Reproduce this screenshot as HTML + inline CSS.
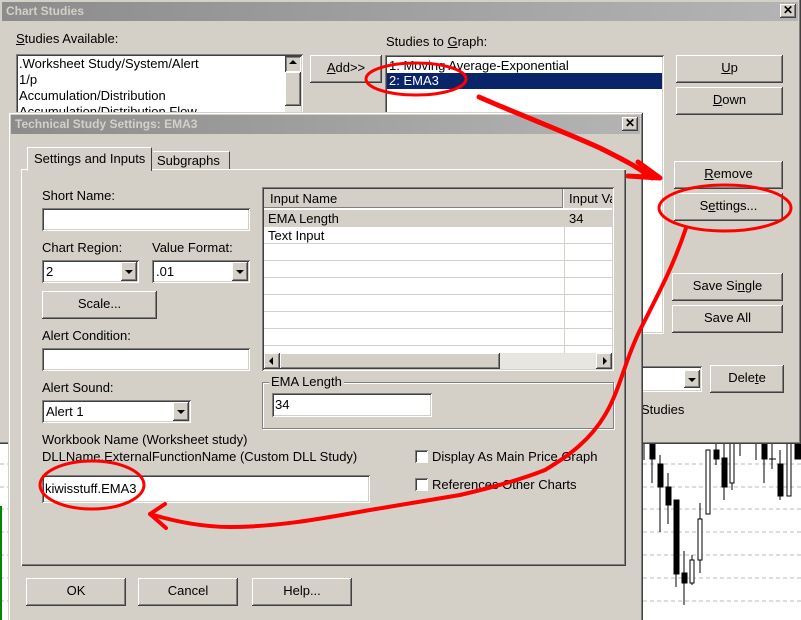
<!DOCTYPE html>
<html><head><meta charset="utf-8"><style>
*{box-sizing:border-box;margin:0;padding:0}
html,body{width:801px;height:620px;overflow:hidden}
body{position:relative;background:#fff;font-family:"Liberation Sans",Tahoma,sans-serif;font-size:13px;color:#000}
.a{position:absolute}
.face{background:#d4d0c8}
.btn{position:absolute;background:#d4d0c8;box-shadow:inset -1px -1px #404040,inset 1px 1px #fff,inset -2px -2px #808080;text-align:center;line-height:26px}
.sunk{position:absolute;background:#fff;box-shadow:inset 1px 1px #808080,inset -1px -1px #fff,inset 2px 2px #404040,inset -2px -2px #d4d0c8}
.title{position:absolute;height:19px;background:linear-gradient(90deg,#8c8c8c,#b4b4b4);color:#d4d0c8;font-weight:bold;font-size:12px;line-height:19px;padding-left:4px}
.xb{position:absolute;width:16px;height:14px;background:#d4d0c8;box-shadow:inset -1px -1px #404040,inset 1px 1px #fff,inset -2px -2px #808080;text-align:center;font-size:12px;line-height:13px;font-weight:bold}
.dd{position:absolute;width:16px;background:#d4d0c8;box-shadow:inset -1px -1px #404040,inset 1px 1px #fff,inset -2px -2px #808080}
.dd:after{content:"";position:absolute;left:4px;top:8px;border-left:4px solid transparent;border-right:4px solid transparent;border-top:4px solid #000}
.t{position:absolute;white-space:nowrap}
.cb{position:absolute;width:13px;height:13px;background:#fff;box-shadow:inset 1px 1px #808080,inset -1px -1px #fff,inset 2px 2px #404040}
</style></head><body>

<svg class="a" style="left:0;top:0" width="801" height="620">
<g stroke="#bbb" stroke-dasharray="4,3">
<line x1="643" y1="464" x2="801" y2="464"/><line x1="643" y1="487" x2="801" y2="487"/><line x1="643" y1="509" x2="801" y2="509"/><line x1="643" y1="532" x2="801" y2="532"/><line x1="643" y1="555" x2="801" y2="555"/><line x1="643" y1="578" x2="801" y2="578"/><line x1="643" y1="601" x2="801" y2="601"/>
<line x1="0" y1="464" x2="8" y2="464"/><line x1="0" y1="487" x2="8" y2="487"/><line x1="0" y1="509" x2="8" y2="509"/><line x1="0" y1="532" x2="8" y2="532"/><line x1="0" y1="555" x2="8" y2="555"/><line x1="0" y1="578" x2="8" y2="578"/><line x1="0" y1="601" x2="8" y2="601"/>
</g>
<line x1="1" y1="506" x2="1" y2="620" stroke="#080" stroke-width="2"/>
<g stroke="#000" fill="#000">
<line x1="644" y1="443" x2="644" y2="460"/>
<line x1="652" y1="443" x2="652" y2="483"/><rect x="650" y="443" width="5" height="16"/>
<line x1="660" y1="455" x2="660" y2="532"/><rect x="658" y="464" width="5" height="23"/>
<line x1="668" y1="473" x2="668" y2="524"/><rect x="666" y="487" width="5" height="18"/>
<line x1="676" y1="500" x2="676" y2="587"/><rect x="674" y="500" width="5" height="74"/>
<line x1="684" y1="551" x2="684" y2="605"/><rect x="682" y="573" width="5" height="10"/>
<line x1="692" y1="555" x2="692" y2="585"/><rect x="690" y="560" width="4" height="23" fill="#fff"/>
<line x1="700" y1="503" x2="700" y2="573"/><rect x="698" y="519" width="4" height="41" fill="#fff"/>
<rect x="706" y="450" width="4" height="64" fill="#fff"/>
<line x1="716" y1="443" x2="716" y2="465"/><rect x="714" y="450" width="5" height="9"/>
<line x1="724" y1="443" x2="724" y2="500"/><rect x="722" y="458" width="5" height="29"/>
<line x1="732" y1="443" x2="732" y2="490"/><rect x="730" y="443" width="4" height="40" fill="#fff"/>
<line x1="740" y1="443" x2="740" y2="456"/>
<line x1="756" y1="443" x2="756" y2="460"/>
<line x1="764" y1="443" x2="764" y2="483"/><rect x="762" y="443" width="5" height="16"/>
<line x1="772" y1="443" x2="772" y2="469"/><line x1="769" y1="459" x2="776" y2="459"/>
<line x1="780" y1="450" x2="780" y2="500"/><rect x="778" y="464" width="5" height="32"/>
<rect x="787" y="443" width="4" height="53" fill="#fff"/>
<rect x="795" y="443" width="6" height="16"/>
</g>
</svg>

<div class="a face" style="left:0;top:0;width:801px;height:444px;box-shadow:inset -1px -1px #404040,inset -2px -2px #808080"></div>
<div class="title" style="left:2px;top:2px;width:796px">Chart Studies</div>
<div class="xb" style="left:780px;top:4px">✕</div>
<div class="t" style="left:16px;top:31px"><u>S</u>tudies Available:</div>
<div class="sunk" style="left:16px;top:54px;width:287px;height:70px"></div>
<div class="t" style="left:19px;top:56px;line-height:16px">.Worksheet Study/System/Alert<br>1/p<br>Accumulation/Distribution<br>Accumulation/Distribution Flow</div>
<div class="a face" style="left:285px;top:56px;width:16px;height:60px;background:#e8e6e0"></div>
<div class="dd" style="left:285px;top:56px;height:16px;transform:rotate(180deg)"></div>
<div class="btn" style="left:285px;top:72px;width:16px;height:34px"></div>
<div class="btn" style="left:310px;top:55px;width:72px;height:28px"><u>A</u>dd&gt;&gt;</div>
<div class="t" style="left:386px;top:34px">Studies to <u>G</u>raph:</div>
<div class="sunk" style="left:385px;top:55px;width:279px;height:279px"></div>
<div class="t" style="left:389px;top:58px">1: Moving Average-Exponential</div>
<div class="a" style="left:387px;top:73px;width:275px;height:16px;background:#0a246a;color:#fff;padding-left:2px;line-height:16px">2: EMA3</div>
<div class="btn" style="left:676px;top:55px;width:107px;height:28px"><u>U</u>p</div>
<div class="btn" style="left:676px;top:87px;width:107px;height:28px"><u>D</u>own</div>
<div class="btn" style="left:674px;top:161px;width:109px;height:28px"><u>R</u>emove</div>
<div class="btn" style="left:674px;top:193px;width:109px;height:28px">S<u>e</u>ttings...</div>
<div class="btn" style="left:672px;top:273px;width:111px;height:28px">Save Si<u>n</u>gle</div>
<div class="btn" style="left:672px;top:305px;width:111px;height:28px">Save All</div>
<div class="sunk" style="left:630px;top:366px;width:72px;height:26px"></div>
<div class="dd" style="left:684px;top:370px;height:18px"></div>
<div class="btn" style="left:710px;top:365px;width:74px;height:28px">Dele<u>t</u>e</div>
<div class="t" style="left:641px;top:402px">Studies</div>

<div class="a face" style="left:8px;top:112px;width:635px;height:508px;box-shadow:inset 1px 1px #d4d0c8,inset -1px 0 #404040,inset 2px 2px #fff,inset -2px 0 #808080"></div>
<div class="title" style="left:11px;top:115px;width:629px">Technical Study Settings: EMA3</div>
<div class="xb" style="left:622px;top:117px">✕</div>
<div class="a face" style="left:21px;top:169px;width:605px;height:397px;box-shadow:inset 1px 1px #fff,inset -1px -1px #404040,inset -2px -2px #808080"></div>
<div class="a face" style="left:27px;top:147px;width:125px;height:24px;border:1px solid #fff;border-bottom:none;border-right:1px solid #404040;padding:3px 0 0 6px">Settings and Inputs</div>
<div class="a face" style="left:153px;top:151px;width:77px;height:18px;border-top:1px solid #fff;border-right:1px solid #404040;padding:1px 0 0 4px">Subgraphs</div>

<div class="t" style="left:42px;top:188px">Short Name:</div>
<div class="sunk" style="left:42px;top:208px;width:208px;height:23px"></div>
<div class="t" style="left:42px;top:240px">Chart Region:</div>
<div class="t" style="left:152px;top:240px">Value Format:</div>
<div class="sunk" style="left:42px;top:260px;width:97px;height:23px"></div><div class="t" style="left:46px;top:264px">2</div>
<div class="dd" style="left:121px;top:262px;height:19px"></div>
<div class="sunk" style="left:152px;top:260px;width:98px;height:23px"></div><div class="t" style="left:156px;top:264px">.01</div>
<div class="dd" style="left:232px;top:262px;height:19px"></div>
<div class="btn" style="left:42px;top:291px;width:115px;height:28px">Scale...</div>
<div class="t" style="left:42px;top:328px">Alert Condition:</div>
<div class="sunk" style="left:42px;top:348px;width:208px;height:23px"></div>
<div class="t" style="left:42px;top:380px">Alert Sound:</div>
<div class="sunk" style="left:42px;top:400px;width:149px;height:23px"></div><div class="t" style="left:46px;top:404px">Alert 1</div>
<div class="dd" style="left:173px;top:402px;height:19px"></div>

<div class="sunk" style="left:262px;top:187px;width:352px;height:184px"></div>
<div class="a" style="left:264px;top:189px;width:299px;height:19px;background:#d4d0c8;box-shadow:inset -1px -1px #808080;padding:2px 0 0 6px">Input Name</div>
<div class="a" style="left:564px;top:189px;width:48px;height:19px;background:#d4d0c8;overflow:hidden;white-space:nowrap;padding:2px 0 0 5px">Input Value</div>
<div class="a" style="left:264px;top:210px;width:348px;height:17px;background:#d4d0c8;padding:1px 0 0 4px">EMA Length<span class="a" style="left:305px;top:1px">34</span></div>
<div class="a" style="left:264px;top:227px;width:348px;height:126px;background:repeating-linear-gradient(#fff 0 16px,#d4d0c8 16px 17px)"></div>
<div class="a" style="left:564px;top:227px;width:1px;height:126px;background:#d4d0c8"></div>
<div class="t" style="left:268px;top:228px">Text Input</div>
<div class="a" style="left:264px;top:353px;width:348px;height:16px;background:#e8e6e0"></div>
<div class="btn" style="left:264px;top:353px;width:16px;height:16px"></div><div class="a" style="left:269px;top:357px;border-top:4px solid transparent;border-bottom:4px solid transparent;border-right:4px solid #000"></div>
<div class="btn" style="left:280px;top:353px;width:220px;height:16px"></div>
<div class="btn" style="left:596px;top:353px;width:16px;height:16px"></div><div class="a" style="left:603px;top:357px;border-top:4px solid transparent;border-bottom:4px solid transparent;border-left:4px solid #000"></div>
<div class="a" style="left:262px;top:382px;width:352px;height:47px;border:1px solid #808080;box-shadow:1px 1px #fff,inset 1px 1px #fff"></div>
<div class="t face" style="left:269px;top:374px;padding:0 2px">EMA Length</div>
<div class="sunk" style="left:272px;top:393px;width:160px;height:24px"></div><div class="t" style="left:275px;top:397px">34</div>

<div class="t" style="left:42px;top:432px">Workbook Name (Worksheet study)</div>
<div class="t" style="left:42px;top:449px">DLLName.ExternalFunctionName (Custom DLL Study)</div>
<div class="sunk" style="left:42px;top:475px;width:328px;height:28px"></div>
<div class="t" style="left:45px;top:481px">kiwisstuff.EMA3</div>
<div class="cb" style="left:415px;top:450px"></div><div class="t" style="left:432px;top:449px">Display As Main Price Graph</div>
<div class="cb" style="left:415px;top:478px"></div><div class="t" style="left:432px;top:477px">References Other Charts</div>

<div class="btn" style="left:26px;top:578px;width:100px;height:28px">OK</div>
<div class="btn" style="left:138px;top:578px;width:100px;height:28px">Cancel</div>
<div class="btn" style="left:252px;top:578px;width:100px;height:28px">Help...</div>

<svg class="a" style="left:0;top:0" width="801" height="620" fill="none" stroke="#f00" stroke-linecap="round" stroke-linejoin="round">
<ellipse cx="416" cy="79" rx="50" ry="16" stroke-width="3"/>
<ellipse cx="725" cy="208" rx="66" ry="23" stroke-width="3"/>
<ellipse cx="92" cy="485" rx="52" ry="24" stroke-width="3"/>
<path d="M479 97 C520 115 560 130 600 148 C620 158 640 168 652 178" stroke-width="5"/>
<path d="M628 176 L660 178 L638 162" stroke-width="5"/>
<path d="M686 228 C672 270 655 300 640 330 C625 360 620 390 605 415 C590 440 570 455 545 470 C520 480 490 488 460 495 C430 500 400 505 370 510 C330 517 280 527 230 527 C200 527 170 520 150 514" stroke-width="4"/>
<path d="M165 504 L150 514 L166 528" stroke-width="4"/>
</svg>
</body></html>
